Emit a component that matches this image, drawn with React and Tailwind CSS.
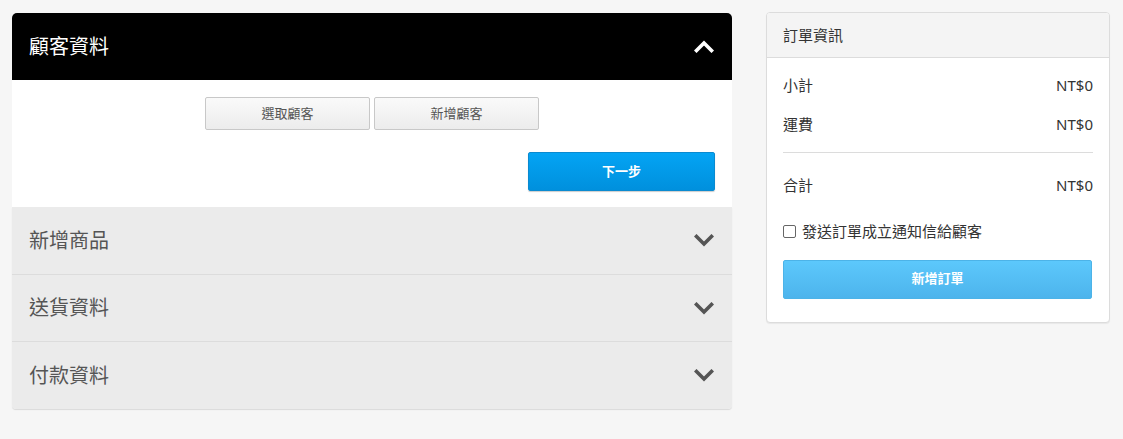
import React from "react";

const FONT = { fontFamily: '"Noto Sans", "Noto Sans CJK TC", sans-serif' };

function ChevronUp({ className }) {
  return (
    <svg width="20" height="13" viewBox="0 0 20 13" className={className}>
      <polyline points="2.5,10.5 10,3 17.5,10.5" fill="none" stroke="currentColor" strokeWidth="3.6" strokeLinecap="square" strokeLinejoin="miter" />
    </svg>
  );
}

function ChevronDown({ className }) {
  return (
    <svg width="20" height="13" viewBox="0 0 20 13" className={className}>
      <polyline points="2.5,2.5 10,10 17.5,2.5" fill="none" stroke="currentColor" strokeWidth="3.6" strokeLinecap="square" strokeLinejoin="miter" />
    </svg>
  );
}

function Section({ title, last, first }) {
  return (
    <div className={`flex ${first ? "h-[68px]" : "h-[67px]"} items-center justify-between bg-[#ebebeb] pl-[17px] pr-[18px] ${last ? "" : "border-b border-[#dcdcdc]"}`}>
      <span className="text-[20px] text-[#555]">{title}</span>
      <ChevronDown className="text-[#555]" />
    </div>
  );
}

export default function App() {
  return (
    <div className="min-h-[439px] w-full bg-[#f6f6f6]" style={FONT}>
      <div className="flex items-start gap-[34px] pl-[12px] pt-[12px]">
        {/* Left panel */}
        <div className="mt-[1px] w-[720px]">
          <div className="flex h-[67px] items-center justify-between rounded-t-[5px] bg-black pl-[17px] pr-[18px]">
            <span className="text-[20px] text-white">顧客資料</span>
            <ChevronUp className="text-white" />
          </div>
          <div className="bg-white pb-[16px] pt-[17px]">
            <div className="flex justify-center gap-[4px]">
              <button className="h-[33px] w-[165px] rounded-[2px] border border-[#c8c8c8] bg-gradient-to-b from-[#fafafa] to-[#ececec] text-[13px] text-[#555]">
                選取顧客
              </button>
              <button className="h-[33px] w-[165px] rounded-[2px] border border-[#c8c8c8] bg-gradient-to-b from-[#fafafa] to-[#ececec] text-[13px] text-[#555]">
                新增顧客
              </button>
            </div>
            <div className="mt-[22px] flex justify-end pr-[17px]">
              <button className="h-[39px] w-[187px] rounded-[2px] border border-[#0a8ad0] bg-gradient-to-b from-[#04a4f4] to-[#0090dd] text-[13px] font-bold text-white shadow-[0_1px_1px_rgba(0,0,0,0.2)]">
                下一步
              </button>
            </div>
          </div>
          <div className="overflow-hidden rounded-b-[4px] shadow-[0_1px_1px_rgba(0,0,0,0.12)]">
            <Section title="新增商品" first />
            <Section title="送貨資料" />
            <Section title="付款資料" last />
          </div>
        </div>

        {/* Right panel */}
        <div className="w-[344px] overflow-hidden rounded-[4px] border border-[#dcdcdc] bg-white shadow-[0_1px_1px_rgba(0,0,0,0.06)]">
          <div className="flex h-[45px] items-center border-b border-[#dcdcdc] bg-[#f4f4f4] px-[16px]">
            <span className="text-[15px] text-[#333]">訂單資訊</span>
          </div>
          <div className="px-[16px] pb-[23px] pt-[8px]">
            <div className="flex h-[39px] items-center justify-between text-[15px] text-[#333]">
              <span>小計</span>
              <span>NT$0</span>
            </div>
            <div className="flex h-[39px] items-center justify-between text-[15px] text-[#333]">
              <span>運費</span>
              <span>NT$0</span>
            </div>
            <div className="mt-[8px] border-t border-[#dcdcdc]" />
            <div className="flex h-[65px] items-center justify-between text-[15px] text-[#333]">
              <span>合計</span>
              <span>NT$0</span>
            </div>
            <label className="mt-[2px] flex items-center gap-[6px] text-[15px] text-[#333]">
              <span className="inline-block h-[13px] w-[13px] rounded-[2px] border border-[#666] bg-white" />
              <span>發送訂單成立通知信給顧客</span>
            </label>
            <button className="mt-[17px] h-[39px] w-[309px] rounded-[2px] border border-[#4cb3e8] bg-gradient-to-b from-[#5cc8fc] to-[#4db4ec] text-[13px] font-bold text-white">
              新增訂單
            </button>
          </div>
        </div>
      </div>
    </div>
  );
}
